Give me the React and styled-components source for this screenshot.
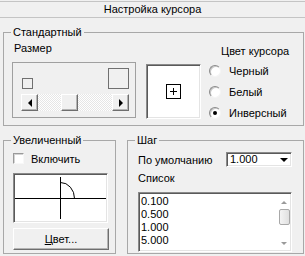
import React from 'react';
import styled, { createGlobalStyle, css } from 'styled-components';

const GlobalStyle = createGlobalStyle`
  html, body {
    margin: 0;
    padding: 0;
    background: #f0f0f0;
  }
  body {
    font-family: "Liberation Sans", Arial, sans-serif;
    font-size: 11px;
    color: #000;
  }
`;

const raised = css`
  box-sizing: border-box;
  background: #f0f0f0;
  border: 1px solid;
  border-color: #fff #6e6e6e #6e6e6e #fff;
  box-shadow: inset -1px -1px #b4b4b4;
`;

const sunken = css`
  box-sizing: border-box;
  background: #fff;
  border: 1px solid;
  border-color: #8a8a8a #fff #fff #8a8a8a;
  box-shadow: inset 1px 1px #5a5a5a, inset -1px -1px #e4e4e4;
`;

const Window = styled.div`
  width: 305px;
  height: 256px;
  box-sizing: border-box;
  padding-top: 1px;
  display: flex;
  flex-direction: column;
`;

const TitleBar = styled.div`
  height: 15px;
  line-height: 15px;
  border-top: 1px solid #c4c4c4;
  border-bottom: 1px solid #c4c4c4;
  text-align: center;
`;

const Body = styled.div`
  padding: 8px 1px 0 3px;
  display: flex;
  flex-direction: column;
  gap: 8px;
`;

const Group = styled.fieldset`
  margin: 0;
  padding: 0;
  min-width: 0;
  box-sizing: border-box;
  height: ${p => p.$h}px;
  border: 1px solid #a8a8a8;
`;

const Legend = styled.legend`
  margin-left: 7px;
  padding: 0 2px;
  line-height: 13px;
`;

const StdContent = styled.div`
  display: flex;
  align-items: flex-start;
  padding-left: 8px;
`;

const SizeColumn = styled.div`
  margin-top: 3px;
  display: flex;
  flex-direction: column;
  gap: 7px;
`;

const Label = styled.div`
  line-height: 13px;
  margin-left: ${p => p.$indent || 0}px;
  margin-top: ${p => p.$mt || 0}px;
  white-space: nowrap;
`;

const SizePanel = styled.div`
  width: 124px;
  height: 56px;
  box-sizing: border-box;
  border: 1px solid #a0a0a0;
  padding: 5px 6px 0 8px;
  display: flex;
  flex-direction: column;
  gap: 5px;
`;

const SquaresRow = styled.div`
  height: 21px;
  display: flex;
  justify-content: space-between;
  align-items: flex-end;
  padding-left: 1px;
`;

const SizeSquare = styled.div`
  width: ${p => p.$size}px;
  height: ${p => p.$size}px;
  box-sizing: border-box;
  border: 1px solid #707070;
`;

const HScroll = styled.div`
  height: 17px;
  display: flex;
  background-color: #fff;
  background-image:
    linear-gradient(45deg, #e6e6e6 25%, transparent 25%, transparent 75%, #e6e6e6 75%),
    linear-gradient(45deg, #e6e6e6 25%, transparent 25%, transparent 75%, #e6e6e6 75%);
  background-size: 2px 2px;
  background-position: 0 0, 1px 1px;
`;

const ScrollButton = styled.div`
  ${raised};
  width: 17px;
  height: 17px;
  flex: none;
  display: flex;
  align-items: center;
  justify-content: center;
  margin-left: ${p => p.$ml || 0}px;
`;

const Arrow = styled.span`
  width: 0;
  height: 0;
  border-style: solid;
  ${p => p.$dir === 'left' && css`
    border-width: 4px 4px 4px 0;
    border-color: transparent #000 transparent transparent;
  `}
  ${p => p.$dir === 'right' && css`
    border-width: 4px 0 4px 4px;
    border-color: transparent transparent transparent #000;
  `}
  ${p => p.$dir === 'down' && css`
    border-width: 4px 4px 0 4px;
    border-color: #000 transparent transparent transparent;
  `}
  ${p => p.$dir === 'up-small' && css`
    border-width: 0 3px 3px 3px;
    border-color: transparent transparent #9a9a9a transparent;
  `}
  ${p => p.$dir === 'down-small' && css`
    border-width: 3px 3px 0 3px;
    border-color: #9a9a9a transparent transparent transparent;
  `}
`;

const Spacer = styled.div`
  flex: 1;
`;

const Preview = styled.div`
  ${sunken};
  width: 55px;
  height: 55px;
  margin: 25px 0 0 10px;
  display: flex;
  align-items: center;
  justify-content: center;
`;

const ColorColumn = styled.div`
  margin: 6px 0 0 8px;
  display: flex;
  flex-direction: column;
`;

const RadioRow = styled.div`
  height: 21px;
  display: flex;
  align-items: center;
  gap: 8px;
  margin-top: ${p => p.$mt || 0}px;
`;

const RadioDot = styled.span`
  width: 12px;
  height: 12px;
  box-sizing: border-box;
  border-radius: 50%;
  background: #fff;
  border: 1px solid;
  border-color: #8a8a8a #f4f4f4 #f4f4f4 #8a8a8a;
  box-shadow: inset 1px 1px #c8c8c8;
  display: flex;
  align-items: center;
  justify-content: center;

  &::after {
    content: '';
    width: 4px;
    height: 4px;
    border-radius: 50%;
    background: #000;
    display: ${p => (p.$checked ? 'block' : 'none')};
  }
`;

const BottomRow = styled.div`
  display: grid;
  grid-template-columns: 113px 1fr;
  gap: 11px;
`;

const ZoomContent = styled.div`
  padding: 5px 0 0 9px;
  display: flex;
  flex-direction: column;
`;

const CheckRow = styled.div`
  height: 13px;
  display: flex;
  align-items: center;
  gap: 7px;
`;

const CheckBox = styled.span`
  width: 11px;
  height: 11px;
  box-sizing: border-box;
  background: #fff;
  border: 1px solid;
  border-color: #9a9a9a #f8f8f8 #f8f8f8 #9a9a9a;
  box-shadow: inset 1px 1px #d4d4d4;
`;

const ZoomPanel = styled.div`
  ${sunken};
  width: 95px;
  height: 50px;
  margin-top: 8px;
  display: flex;
`;

const PushButton = styled.div`
  ${raised};
  width: 96px;
  height: 22px;
  margin-top: 5px;
  display: flex;
  align-items: center;
  justify-content: center;
`;

const StepContent = styled.div`
  padding: 5px 11px 0 10px;
  display: flex;
  flex-direction: column;
`;

const DefaultRow = styled.div`
  display: flex;
  align-items: center;
  justify-content: space-between;
  height: 15px;
`;

const Combo = styled.div`
  ${sunken};
  width: 66px;
  height: 15px;
  display: flex;
  align-items: center;
  padding-left: 3px;
  line-height: 13px;
`;

const ComboButton = styled.div`
  margin-left: auto;
  width: 11px;
  height: 100%;
  display: flex;
  align-items: center;
  justify-content: center;
  padding-right: 2px;
`;

const ListBox = styled.div`
  ${sunken};
  height: 60px;
  margin-top: 7px;
  display: flex;
  padding: 2px 1px 1px 2px;
`;

const ListItems = styled.div`
  flex: 1;
  line-height: 13px;
`;

const VScroll = styled.div`
  width: 12px;
  display: flex;
  flex-direction: column;
  align-items: center;
`;

const VArrowCell = styled.div`
  height: 14px;
  display: flex;
  align-items: center;
  justify-content: center;
`;

const VThumb = styled.div`
  width: 11px;
  height: 16px;
  box-sizing: border-box;
  border: 1px solid #a8a8a8;
  border-radius: 2px;
  background: linear-gradient(90deg, #f4f4f4, #e0e0e0);
`;

const Crosshair = () => (
  <svg width="93" height="48" viewBox="0 0 93 48" shapeRendering="crispEdges">
    <line x1="1" y1="24.5" x2="92" y2="24.5" stroke="#000" />
    <line x1="46.5" y1="3" x2="46.5" y2="45" stroke="#000" />
    <path d="M46.5 8.5 A14 16 0 0 1 60.5 24.5" fill="none" stroke="#000" shapeRendering="auto" />
  </svg>
);

const CursorMark = () => (
  <svg width="15" height="15" viewBox="0 0 15 15" shapeRendering="crispEdges">
    <rect x="0.5" y="0.5" width="14" height="14" fill="#fff" stroke="#000" />
    <line x1="4" y1="7.5" x2="11" y2="7.5" stroke="#000" />
    <line x1="7.5" y1="4" x2="7.5" y2="11" stroke="#000" />
  </svg>
);

const steps = ['0.100', '0.500', '1.000', '5.000'];

const colors = [
  { label: 'Черный', checked: false },
  { label: 'Белый', checked: false },
  { label: 'Инверсный', checked: true },
];

export default function App() {
  return (
    <>
      <GlobalStyle />
      <Window>
        <TitleBar>Настройка курсора</TitleBar>
        <Body>
          <Group $h={100}>
            <Legend>Стандартный</Legend>
            <StdContent>
              <SizeColumn>
                <Label $indent={2}>Размер</Label>
                <SizePanel>
                  <SquaresRow>
                    <SizeSquare $size={11} />
                    <SizeSquare $size={21} />
                  </SquaresRow>
                  <HScroll>
                    <ScrollButton><Arrow $dir="left" /></ScrollButton>
                    <ScrollButton $ml={23} />
                    <Spacer />
                    <ScrollButton><Arrow $dir="right" /></ScrollButton>
                  </HScroll>
                </SizePanel>
              </SizeColumn>
              <Preview>
                <CursorMark />
              </Preview>
              <ColorColumn>
                <Label $indent={12}>Цвет курсора</Label>
                {colors.map((c, i) => (
                  <RadioRow key={c.label} $mt={i === 0 ? 2 : 0}>
                    <RadioDot $checked={c.checked} />
                    <span>{c.label}</span>
                  </RadioRow>
                ))}
              </ColorColumn>
            </StdContent>
          </Group>

          <BottomRow>
            <Group $h={120}>
              <Legend>Увеличенный</Legend>
              <ZoomContent>
                <CheckRow>
                  <CheckBox />
                  <span>Включить</span>
                </CheckRow>
                <ZoomPanel>
                  <Crosshair />
                </ZoomPanel>
                <PushButton>
                  <span><u>Ц</u>вет...</span>
                </PushButton>
              </ZoomContent>
            </Group>

            <Group $h={120}>
              <Legend>Шаг</Legend>
              <StepContent>
                <DefaultRow>
                  <span>По умолчанию</span>
                  <Combo>
                    <span>1.000</span>
                    <ComboButton><Arrow $dir="down" /></ComboButton>
                  </Combo>
                </DefaultRow>
                <Label $mt={5}>Список</Label>
                <ListBox>
                  <ListItems>
                    {steps.map(s => <div key={s}>{s}</div>)}
                  </ListItems>
                  <VScroll>
                    <VArrowCell><Arrow $dir="up-small" /></VArrowCell>
                    <VThumb />
                    <Spacer />
                    <VArrowCell><Arrow $dir="down-small" /></VArrowCell>
                  </VScroll>
                </ListBox>
              </StepContent>
            </Group>
          </BottomRow>
        </Body>
      </Window>
    </>
  );
}
